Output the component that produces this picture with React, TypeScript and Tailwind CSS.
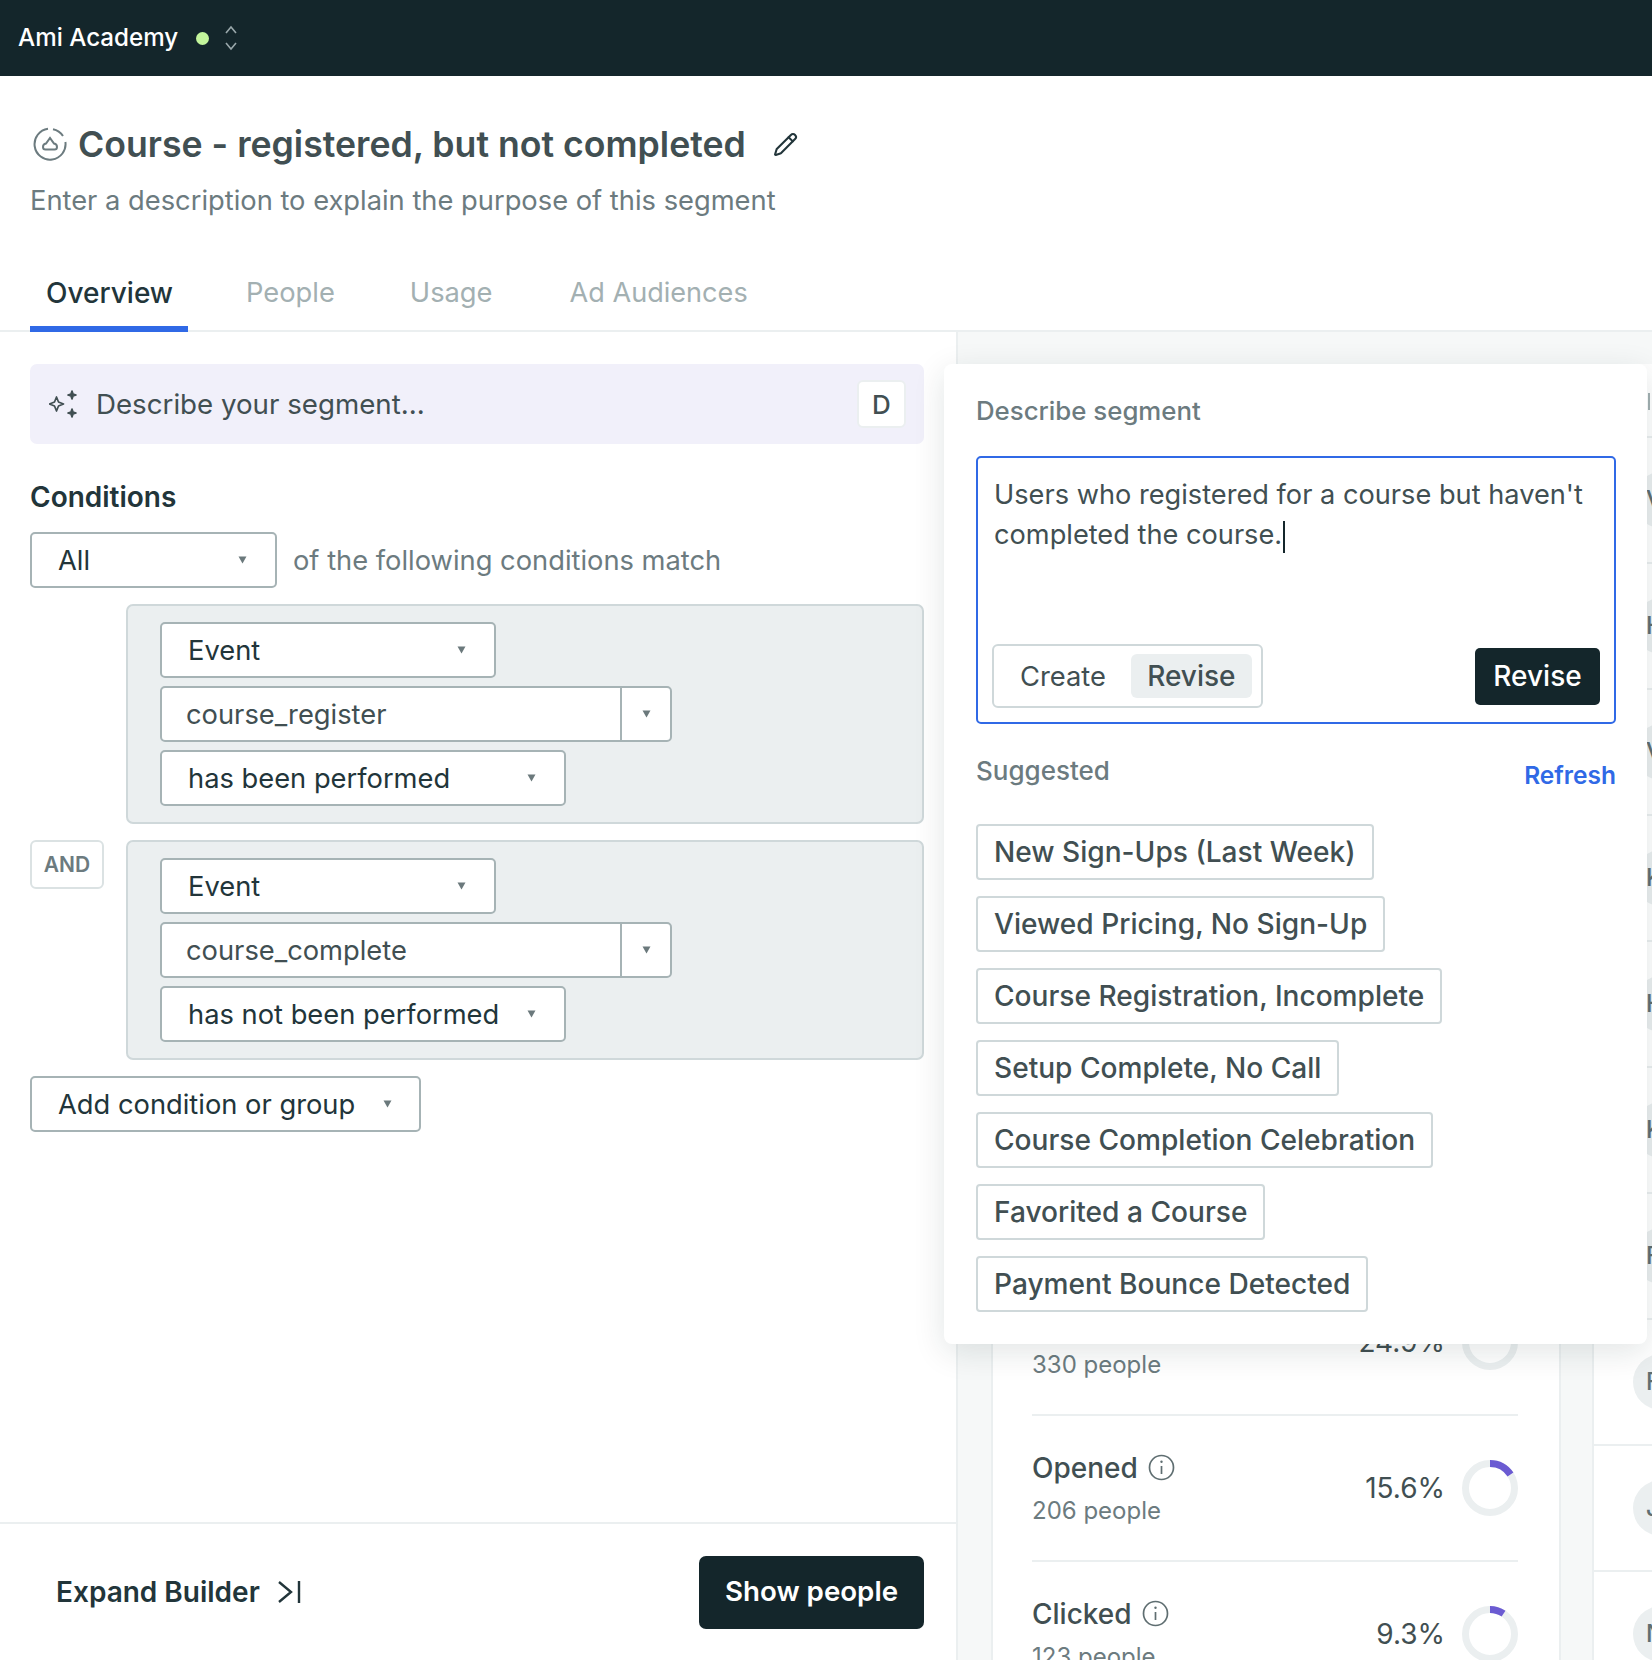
import { Pencil } from "lucide-react";

function Caret() {
  return (
    <svg width="9" height="8" viewBox="0 0 9 8" className="shrink-0">
      <polygon points="0.5,0.5 8.5,0.5 4.5,7.5" fill="#6b797c" />
    </svg>
  );
}

function SelectBox({ label, className }: { label: string; className: string }) {
  return (
    <div
      className={`flex h-[56px] items-center justify-between rounded-[5px] border-2 border-[#a6b3b5] bg-white pl-[26px] text-[27.3px] text-[#22353a] ${className}`}
    >
      <span className="translate-y-[1px]">{label}</span>
      <Caret />
    </div>
  );
}

function ComboBox({ label }: { label: string }) {
  return (
    <div className="flex h-[56px] w-[512px] items-center rounded-[5px] border-2 border-[#a6b3b5] bg-white text-[27.3px] text-[#414f52]">
      <span className="flex-1 translate-y-[1px] pl-[24px]">{label}</span>
      <div className="flex h-full w-[50px] items-center justify-center border-l-2 border-[#a6b3b5]">
        <Caret />
      </div>
    </div>
  );
}

function ConditionGroup({ event, verb }: { event: string; verb: string }) {
  return (
    <div className="flex h-[220px] flex-1 flex-col gap-[8px] rounded-[7px] border-2 border-[#cfd8da] bg-[#ebeff0] pl-[32px] pt-[16px]">
      <SelectBox label="Event" className="w-[336px] pr-[28px]" />
      <ComboBox label={event} />
      <SelectBox label={verb} className="w-[406px] pr-[28px]" />
    </div>
  );
}

function Ring({ pct }: { pct: number }) {
  const c = 2 * Math.PI * 24.5;
  return (
    <svg width="56" height="56" viewBox="0 0 56 56" className="shrink-0 -rotate-90">
      <circle cx="28" cy="28" r="24.5" fill="none" stroke="#ebeff0" strokeWidth="7" />
      <circle
        cx="28"
        cy="28"
        r="24.5"
        fill="none"
        stroke="#6b5bd2"
        strokeWidth="7"
        strokeDasharray={`${(pct / 100) * c} ${c}`}
      />
    </svg>
  );
}

function InfoIcon() {
  return (
    <svg width="27" height="27" viewBox="0 0 27 27" fill="none" stroke="#5f6e71" strokeWidth="1.7">
      <circle cx="13.5" cy="13.5" r="12" />
      <path d="M13.5 12v8" />
      <circle cx="13.5" cy="7.8" r="1.2" fill="#5f6e71" stroke="none" />
    </svg>
  );
}

function StatRow({ name, people, pct, value }: { name?: string; people: string; pct: number; value: string }) {
  return (
    <div className="flex h-[146px] items-center justify-between border-b-2 border-[#ebeff0]">
      <div className="flex translate-y-[1px] flex-col gap-[13px]">
        <div className="flex h-[30px] items-center gap-[10px] text-[28px] font-medium leading-none text-[#414f52]">
          {name}
          {name && <InfoIcon />}
        </div>
        <div className="text-[24px] leading-[30px] text-[#6c7b7f]">{people}</div>
      </div>
      <div className="flex items-center gap-[17px]">
        <span className="text-[28px] text-[#414f52]">{value}</span>
        <Ring pct={pct} />
      </div>
    </div>
  );
}

function Avatar({ letter }: { letter: string }) {
  return (
    <div className="flex h-[126px] items-center border-b-2 border-[#ebeff0] pl-[39px]">
      <div className="flex h-[56px] w-[56px] shrink-0 items-center rounded-full bg-[#ebeff0] pl-[13px] text-[24px] font-medium text-[#5f6e71]">
        {letter}
      </div>
    </div>
  );
}

const chips = [
  "New Sign-Ups (Last Week)",
  "Viewed Pricing, No Sign-Up",
  "Course Registration, Incomplete",
  "Setup Complete, No Call",
  "Course Completion Celebration",
  "Favorited a Course",
  "Payment Bounce Detected",
];

function DescribePopover() {
  return (
    <div className="absolute left-[944px] top-[364px] flex h-[980px] w-[703px] flex-col rounded-[8px] bg-white pl-[32px] pr-[31px] pt-[32px] shadow-[0_8px_32px_rgba(20,38,43,0.12)]">
      <div className="h-[30px] text-[25.8px] font-medium leading-[30px] text-[#6c7b7f]">Describe segment</div>
      <div className="mt-[30px] flex h-[268px] flex-col justify-between rounded-[5px] border-2 border-[#3069e6] pb-[14px] pl-[14px] pr-[14px] pt-[17px]">
        <div className="whitespace-nowrap pl-[2px] text-[27.2px] leading-[40px] text-[#414f52]">
          Users who registered for a course but haven't
          <br />
          completed the course.
          <span className="-my-[4px] ml-[1px] inline-block h-[32px] w-[2px] bg-[#14262b] align-middle" />
        </div>
        <div className="flex items-center justify-between">
          <div className="flex h-[64px] w-[271px] items-center rounded-[6px] border-2 border-[#cfd8da] pl-[26px] text-[27.3px]">
            <span className="translate-y-[1px] text-[#414f52]">Create</span>
            <span className="ml-[25px] flex h-[44px] w-[121px] items-center justify-center rounded-[6px] bg-[#ebeff0] text-[28px] font-medium text-[#414f52]">
              Revise
            </span>
          </div>
          <div className="flex h-[57px] w-[125px] items-center justify-center rounded-[5px] bg-[#14262b] text-[28px] font-medium text-white">
            Revise
          </div>
        </div>
      </div>
      <div className="mt-[28px] flex h-[36px] items-center justify-between">
        <span className="text-[26px] font-medium text-[#6c7b7f]">Suggested</span>
        <span className="translate-y-[5px] text-[24.5px] font-semibold text-[#3069e6]">Refresh</span>
      </div>
      <div className="mt-[36px] flex flex-col items-start gap-[16px]">
        {chips.map((c) => (
          <div
            key={c}
            className="flex h-[56px] items-center rounded-[4px] border-2 border-[#cfd8da] px-[16px] text-[28.1px] font-medium text-[#414f52]"
          >
            {c}
          </div>
        ))}
      </div>
    </div>
  );
}

export default function App() {
  return (
    <div className="relative h-[1660px] w-[1652px] overflow-hidden bg-white font-['Inter',sans-serif]">
      <header className="flex h-[76px] items-center bg-[#14262b] pl-[18px]">
        <span className="text-[24.2px] font-medium text-white">Ami Academy</span>
        <span className="ml-[18px] h-[13px] w-[13px] rounded-full bg-[#c3f59c]" />
        <svg width="14" height="26" viewBox="0 0 14 26" fill="none" stroke="#9aa8ab" strokeWidth="1.6" className="ml-[15px]">
          <path d="M2 8l5-6 5 6M2 18l5 6 5-6" />
        </svg>
      </header>

      <div className="h-[256px] border-b-2 border-[#ebeff0] pl-[30px]">
        <div className="flex items-center pl-[3px] pt-[49px]">
          <svg width="34" height="34" viewBox="0 0 34 34" fill="none" stroke="#6c7b7f" strokeWidth="2">
            <path d="M15 1.8A15.5 15.5 0 1 0 32.4 15" />
            <path d="M20 2.2A15.5 15.5 0 0 1 30 9" />
            <path d="M10 20c0-2 1-3 3-3.4L17 11l4 5.6c2 .4 3 1.4 3 3.4 0 1.5-1 2.5-2.5 2.5h-9C11 22.5 10 21.5 10 20z" />
          </svg>
          <h1 className="ml-[11px] text-[35.65px] font-semibold leading-[38px] text-[#414f52]">Course - registered, but not completed</h1>
          <Pencil className="ml-[27px]" size={25} color="#22353a" strokeWidth={2} />
        </div>
        <p className="mt-[20px] text-[27.3px] leading-[36px] text-[#6c7b7f]">Enter a description to explain the purpose of this segment</p>
        <nav className="mt-[49px] flex text-[27.3px] leading-[36px]">
          <div className="h-[64px] w-[158px] border-b-[6px] border-[#3069e6] pl-[16px] pt-[7px] text-[28px] font-medium text-[#22353a]">Overview</div>
          <div className="ml-[58px] pt-[7px] text-[#a3b0b2]">People</div>
          <div className="ml-[75px] pt-[7px] text-[#a3b0b2]">Usage</div>
          <div className="ml-[77px] pt-[7px] text-[27.1px] text-[#a3b0b2]">Ad Audiences</div>
        </nav>
      </div>

      <div className="flex h-[1328px]">
        <main className="flex w-[958px] shrink-0 flex-col border-r-2 border-[#ebeff0]">
          <div className="flex-1 pl-[30px] pr-[32px] pt-[32px]">
            <div className="flex h-[80px] items-center rounded-[7px] bg-[#f1f0fa] pl-[19px] pr-[18px]">
              <svg width="30" height="30" viewBox="0 0 30 30" fill="none" stroke="#414f52" strokeWidth="1.7" strokeLinejoin="round">
                <path d="M10.5 9l2 5 5 2-5 2-2 5-2-5-5-2 5-2z" transform="translate(-3 -1)" />
                <path d="M23 2l1 3 3 1-3 1-1 3-1-3-3-1 3-1z" fill="#414f52" />
                <path d="M23 20l1 3 3 1-3 1-1 3-1-3-3-1 3-1z" fill="#414f52" />
              </svg>
              <span className="ml-[17px] flex-1 translate-y-[1px] text-[27.7px] text-[#414f52]">Describe your segment...</span>
              <div className="flex h-[48px] w-[49px] items-center justify-center rounded-[6px] border-2 border-[#ebeff0] bg-white text-[26px] font-medium text-[#414f52]">
                D
              </div>
            </div>

            <h2 className="mt-[36px] text-[28px] font-semibold leading-[34px] text-[#22353a]">Conditions</h2>
            <div className="mt-[18px] flex items-center">
              <SelectBox label="All" className="w-[247px] pr-[28px]" />
              <span className="ml-[16px] translate-y-[1px] text-[27.3px] text-[#6c7b7f]">of the following conditions match</span>
            </div>
            <div className="mt-[16px] flex pl-[96px]">
              <ConditionGroup event="course_register" verb="has been performed" />
            </div>
            <div className="mt-[16px] flex">
              <div className="mr-[22px] flex h-[49px] w-[74px] items-center justify-center rounded-[6px] border-2 border-[#dbe2e3] pt-[1px] text-[21px] font-semibold text-[#6c7b7f]">
                AND
              </div>
              <ConditionGroup event="course_complete" verb="has not been performed" />
            </div>
            <div className="mt-[16px]">
              <SelectBox label="Add condition or group" className="w-[391px] pr-[27px]" />
            </div>
          </div>
          <footer className="flex h-[138px] items-center justify-between border-t-2 border-[#ebeff0] pl-[56px] pr-[32px]">
            <div className="flex items-center gap-[18px] text-[28px] font-semibold text-[#22353a]">
              Expand Builder
              <svg width="24" height="24" viewBox="0 0 24 24" fill="none" stroke="#22353a" strokeWidth="2.4">
                <path d="M1 2l12 10L1 22M21 1v22" />
              </svg>
            </div>
            <div className="flex h-[73px] w-[225px] items-center justify-center rounded-[7px] bg-[#14262b] text-[27.7px] font-semibold text-white">
              Show people
            </div>
          </footer>
        </main>

        <aside className="flex flex-1 gap-[31px] overflow-hidden bg-[#f6f8f8] pl-[33px] pt-[32px]">
          <div className="h-full w-[570px] shrink-0 rounded-t-[8px] border-x-2 border-[#ebeff0] bg-white pl-[39px] pr-[41px] pt-[906px]">
            <StatRow people="330 people" pct={24.9} value="24.9%" />
            <StatRow name="Opened" people="206 people" pct={15.6} value="15.6%" />
            <StatRow name="Clicked" people="123 people" pct={9.3} value="9.3%" />
          </div>
          <div className="h-full w-[200px] shrink-0 border-l-2 border-[#ebeff0] bg-white pt-[10px]">
            <div className="h-[64px] border-b-2 border-[#ebeff0] pl-[54px] pt-[19px]">
              <div className="h-[17px] w-[2px] bg-[#a3b0b2]" />
            </div>
            {["V", "H", "V", "K", "H", "K", "F", "F", "J", "N"].map((l, i) => (
              <Avatar key={i} letter={l} />
            ))}
          </div>
        </aside>
      </div>

      <DescribePopover />
    </div>
  );
}
